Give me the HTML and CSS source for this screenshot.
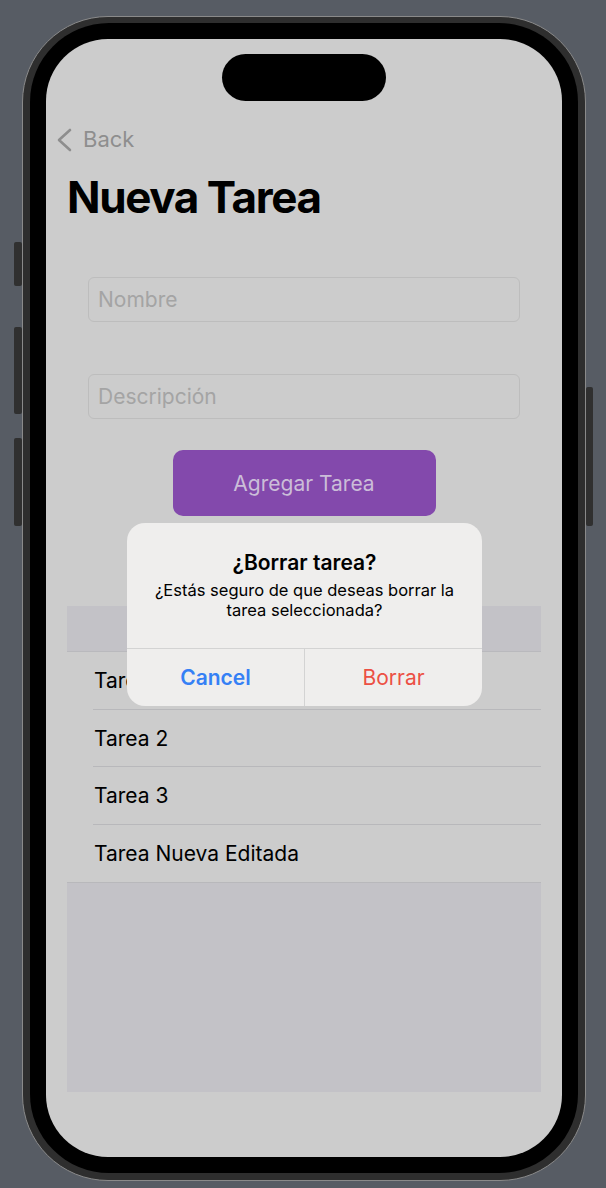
FILE: index.html
```html
<!DOCTYPE html>
<html lang="es">
<head>
<meta charset="utf-8">
<title>Nueva Tarea</title>
<link rel="stylesheet" href="styles.css">
</head>
<body>
<div class="device">
  <span class="side-btn side-action"></span>
  <span class="side-btn side-vol-up"></span>
  <span class="side-btn side-vol-down"></span>
  <span class="side-btn side-power"></span>
  <div class="bezel">
    <div class="screen">
      <div class="island"></div>
      <nav class="nav">
        <svg class="chevron" width="18" height="24" viewBox="0 0 18 24"><polyline points="14,2 3,12 14,22" fill="none" stroke="#8e8e8e" stroke-width="2.6" stroke-linecap="round" stroke-linejoin="round"/></svg>
        <span class="nav-back">Back</span>
      </nav>
      <h1 class="title">Nueva Tarea</h1>
      <div class="form">
        <div class="field">Nombre</div>
        <div class="field">Descripción</div>
        <div class="add-btn">Agregar Tarea</div>
      </div>
      <div class="list">
        <div class="list-header"></div>
        <div class="row"><span>Tarea 1</span></div>
        <div class="row"><span>Tarea 2</span></div>
        <div class="row"><span>Tarea 3</span></div>
        <div class="row row-last"><span>Tarea Nueva Editada</span></div>
        <div class="list-fill"></div>
      </div>
      <div class="alert">
        <div class="alert-body">
          <div class="alert-title">¿Borrar tarea?</div>
          <div class="alert-msg">¿Estás seguro de que deseas borrar la tarea seleccionada?</div>
        </div>
        <div class="alert-actions">
          <div class="alert-btn cancel">Cancel</div>
          <div class="alert-btn destructive">Borrar</div>
        </div>
      </div>
    </div>
  </div>
</div>
</body>
</html>
```

FILE: styles.css
```css
* { box-sizing: border-box; }
html, body { margin: 0; padding: 0; }
body {
  background: #575c64;
  width: 606px;
  height: 1188px;
  overflow: hidden;
  font-family: Inter, "Noto Sans", sans-serif;
}
.device {
  position: relative;
  margin: 16px 0 0 22px;
  width: 564px;
  height: 1165px;
  border: 1px solid #8a8a8a;
  border-radius: 86px;
  background: #2e2e2e;
  padding: 6px 7px 7px 7px;
}
.side-btn {
  position: absolute;
  background: #303030;
  border-radius: 2px;
}
.side-action { left: -9px; top: 225px; width: 8px; height: 44px; }
.side-vol-up { left: -9px; top: 310px; width: 8px; height: 87px; }
.side-vol-down { left: -9px; top: 421px; width: 8px; height: 88px; }
.side-power { right: -8px; top: 370px; width: 7px; height: 139px; }
.bezel {
  height: 100%;
  background: #000;
  border-radius: 79px;
  padding: 16px;
}
.screen {
  position: relative;
  height: 100%;
  background: #cccccc;
  border-radius: 62px;
  overflow: hidden;
  display: flex;
  flex-direction: column;
}
.island {
  align-self: center;
  margin-top: 15px;
  width: 164px;
  height: 47px;
  border-radius: 24px;
  background: #000;
  flex: none;
}
.nav {
  margin-top: 18px;
  height: 40px;
  display: flex;
  align-items: center;
  padding-left: 10px;
  gap: 9px;
  flex: none;
}
.chevron { display: block; margin-top: 2px; }
.nav-back {
  font-size: 22px;
  color: #8e8e8e;
  line-height: 40px;
}
.title {
  margin: 12px 0 0 0;
  padding-left: 21px;
  font-size: 44px;
  line-height: 52px;
  font-weight: 700;
  letter-spacing: -1.4px;
  color: #000;
  flex: none;
}
.form {
  margin-top: 54px;
  display: flex;
  flex-direction: column;
  align-items: center;
  flex: none;
}
.field {
  width: 432px;
  height: 45px;
  border: 1px solid #bdbdbd;
  border-radius: 6px;
  padding-left: 9px;
  display: flex;
  align-items: center;
  font-size: 21px;
  color: #a4a4a4;
}
.field + .field { margin-top: 52px; }
.add-btn {
  margin-top: 31px;
  width: 263px;
  height: 66px;
  border-radius: 10px;
  background: #8349ac;
  color: #cbbdd8;
  font-size: 21px;
  display: flex;
  align-items: center;
  justify-content: center;
}
.list {
  margin: 90px auto 0 auto;
  width: 474px;
  flex: none;
}
.list-header {
  height: 46px;
  background: #c3c2c7;
  border-bottom: 1px solid #b9b9bd;
}
.row {
  height: 57.5px;
  padding-left: 27px;
  display: flex;
  align-items: center;
  font-size: 21px;
  color: #000;
  position: relative;
}
.row::after {
  content: "";
  position: absolute;
  left: 26px;
  right: 0;
  bottom: 0;
  height: 1px;
  background: #b8b8bb;
}
.row-last::after { display: none; }
.list-fill {
  height: 210px;
  background: #c3c2c7;
  border-top: 1px solid #b8b8bb;
}
.alert {
  position: absolute;
  left: 81px;
  top: 484px;
  width: 355px;
  height: 183px;
  border-radius: 18px;
  background: #efeeed;
  display: flex;
  flex-direction: column;
  overflow: hidden;
}
.alert-body {
  flex: 1;
  padding: 27px 18px 0 18px;
  text-align: center;
  color: #000;
}
.alert-title {
  font-size: 21px;
  line-height: 26px;
  font-weight: 600;
}
.alert-msg {
  margin-top: 4px;
  font-size: 16.5px;
  line-height: 20px;
}
.alert-actions {
  height: 58px;
  display: flex;
  border-top: 1px solid #d3d3d3;
  flex: none;
}
.alert-btn {
  flex: 1;
  display: flex;
  align-items: center;
  justify-content: center;
  font-size: 21px;
}
.alert-btn + .alert-btn { border-left: 1px solid #d3d3d3; }
.cancel { color: #3580f5; font-weight: 600; }
.destructive { color: #ec5044; }
```
